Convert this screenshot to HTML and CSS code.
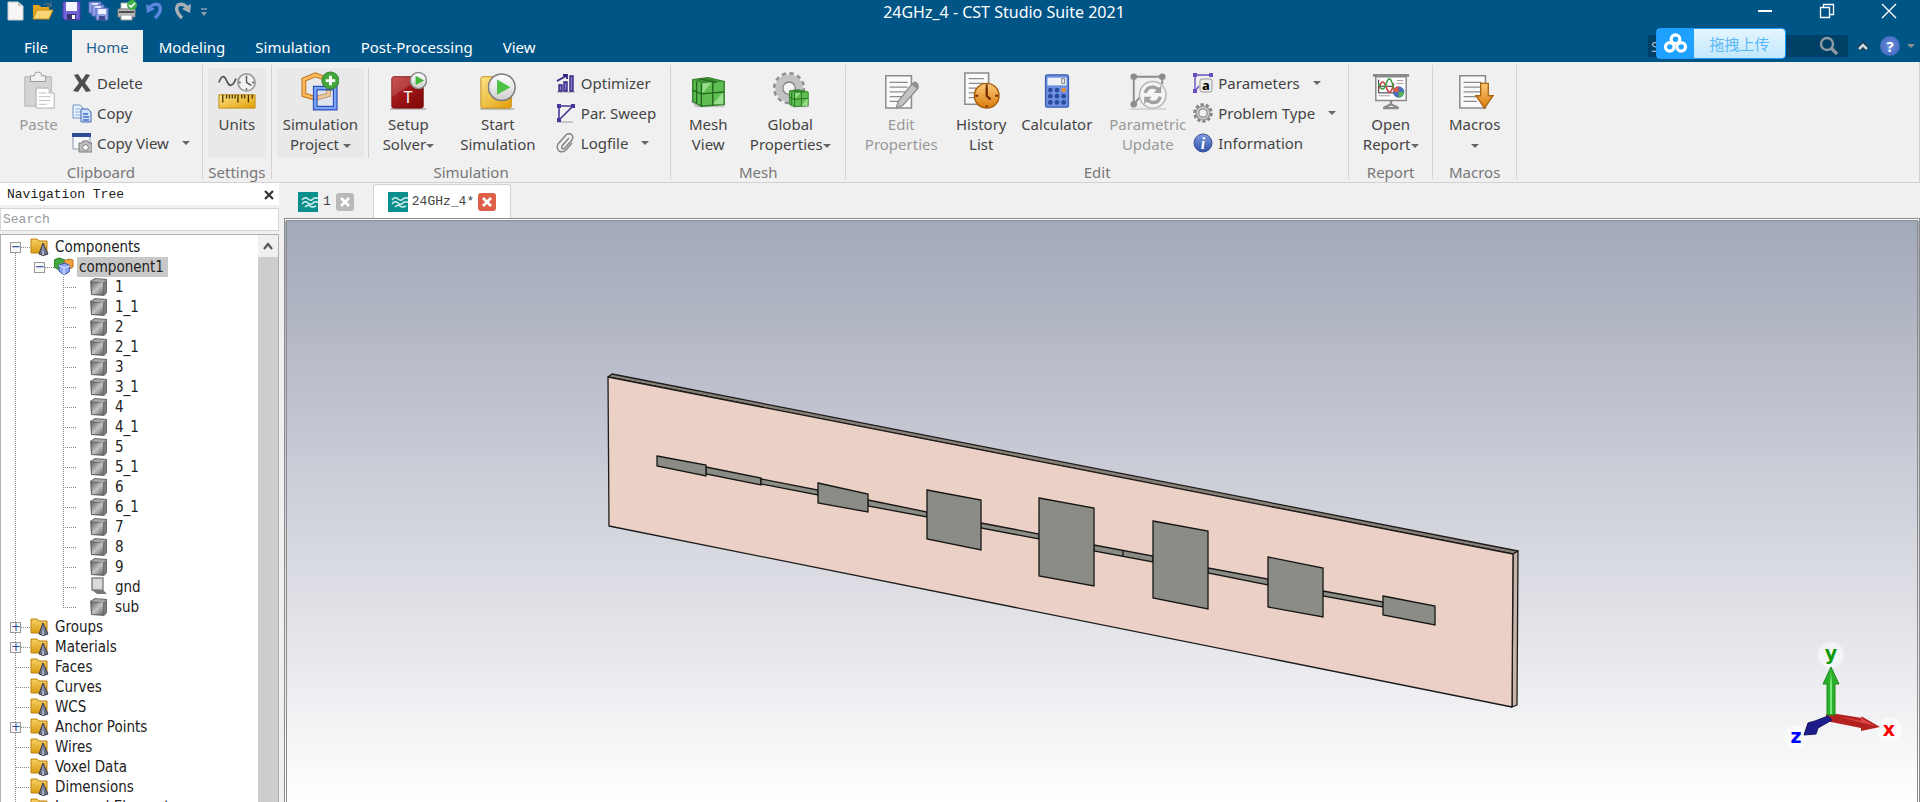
FILE: index.html
```html
<!DOCTYPE html>
<html lang="en">
<head>
  <meta charset="UTF-8" />
  <meta name="viewport" content="width=device-width, initial-scale=1.0"/>
  <title>24GHz_4 - CST Studio Suite 2021</title>
  <link rel="stylesheet" href="styles.css">
</head>
<body>

<!-- Shared icons -->
<svg class="defs" width="0" height="0" aria-hidden="true">
  <defs>
    <linearGradient id="gold" x1="0" y1="0" x2="1" y2="1"><stop offset="0" stop-color="#fbe38a"/><stop offset="1" stop-color="#e3a008"/></linearGradient>
    <linearGradient id="folderFill" x1="0" y1="0" x2="0" y2="1"><stop offset="0" stop-color="#f7cf62"/><stop offset="1" stop-color="#dc9e14"/></linearGradient>
    <linearGradient id="grey" x1="0" y1="0" x2="1" y2="1"><stop offset="0" stop-color="#6f6f6f"/><stop offset=".5" stop-color="#c4c4c4"/><stop offset="1" stop-color="#6a6a6a"/></linearGradient>
    <linearGradient id="silver" x1="0" y1="0" x2="0" y2="1"><stop offset="0" stop-color="#ffffff"/><stop offset="1" stop-color="#cfcfcf"/></linearGradient>
    <linearGradient id="red" x1="0" y1="0" x2="1" y2="1"><stop offset="0" stop-color="#c23a3a"/><stop offset=".5" stop-color="#9c1414"/><stop offset="1" stop-color="#7d0808"/></linearGradient>
    <linearGradient id="orange" x1="0" y1="0" x2="0" y2="1"><stop offset="0" stop-color="#ffc978"/><stop offset="1" stop-color="#d97c0c"/></linearGradient>
    <linearGradient id="blue" x1="0" y1="0" x2="0" y2="1"><stop offset="0" stop-color="#7f9ce0"/><stop offset="1" stop-color="#2f50a8"/></linearGradient>
  </defs>
  <symbol id="i-folder" viewBox="0 0 20 20">
    <path d="M1 2h6l2 2h8v12H1z" fill="url(#folderFill)" stroke="#b9800f"/>
    <path d="M13 6l5 11q-5 3-9 0z" fill="#6d7388" stroke="#3d3f4a"/>
    <path d="M13 8l1 10h-2z" fill="#b9bfd6"/>
  </symbol>
  <symbol id="i-cube" viewBox="0 0 20 20">
    <path d="M1 4l5-3 12 1v14l-3 3-13-1z" fill="#6c6c6c"/>
    <path d="M2 4l5-2 10 1-3 3z" fill="#a6a6a6"/>
    <path d="M3 6h11v11H3z" fill="url(#grey)"/>
    <path d="M15 6l2-2v12l-2 2z" fill="#7d7d7d"/>
  </symbol>
  <symbol id="i-logo" viewBox="0 0 20 20">
    <rect width="20" height="20" fill="#0b8f8c"/>
    <path d="M4 8q3-4 6-1t6-1h4M4 12q3-4 6-1t6-1h4M7 15q3-3 5-1t6 0" fill="none" stroke="#d7f3f0" stroke-width="1.400"/>
  </symbol>
  <symbol id="i-mesh" viewBox="0 0 40 40">
    <path d="M1 30l6 7 30 0 2-4z" fill="#000" opacity=".18"/>
    <path d="M4 8l16-2 17 4v24l-24 2-9-5z" fill="#5fbf52" stroke="#2f7d28" stroke-width="1.500"/>
    <path d="M4 8l16-2 17 4-24 2z" fill="#3f9136"/>
    <path d="M25 34L36 21v13zM14 22l10-11-10 1z" fill="#a6e39c" opacity=".8"/>
    <path d="M13 12v24M25 11v24M4 19l9 4 24-2M8 10v23M11 7l18 4" fill="none" stroke="#23691d" stroke-width="1.500"/>
  </symbol>
  <symbol id="i-doc" viewBox="0 0 40 40">
    <path d="M4 4h27v34H4z" fill="#fafafa" stroke="#8b8b8b" stroke-width="1.600"/>
    <path d="M8 11h19M8 16h19M8 21h19M8 26h19M8 31h14" stroke="#8d8d8d" stroke-width="1.400"/>
  </symbol>
</svg>

<header class="titlebar">
  <div class="title-row">
    <div class="quick">
      <button aria-label="New"><svg viewBox="0 0 22 22"><path d="M4 2h10l5 4v14H4z" fill="#f6f6f6" stroke="#cdcdcd"/><path d="M14 2v4h5z" fill="#c4c4c4"/></svg></button>
      <button aria-label="Open"><svg viewBox="0 0 22 22"><path d="M1 5h6l2 2h8v12H1z" fill="#e2a51c"/><path d="M5 10h16l-4 9H1z" fill="#fbd676" stroke="#c98c12"/><path d="M12 5q4-4 7 1M19 2v4h-4" fill="none" stroke="#4b6a80" stroke-width="1.400"/></svg></button>
      <button aria-label="Save"><svg viewBox="0 0 22 22"><path d="M3 2h17v18H5l-2-2z" fill="#6d63d6" stroke="#4a3fae"/><path d="M6 2h11v9H6z" fill="#f4f4ff"/><path d="M7 14h9v6H7z" fill="#3a3570"/><path d="M12 15h3v4h-3z" fill="#fff"/></svg></button>
      <button aria-label="Save all"><svg viewBox="0 0 22 22"><g fill="#8fa2e6" stroke="#5b6bc0"><path d="M1 2h12v11H1z"/><path d="M4 5h12v11H4z"/><path d="M8 8h12v12H8z"/></g><path d="M10 9h8v5h-8z" fill="#eef1ff"/><path d="M4 3h6v2H4zM7 6h6v2H7z" fill="#dde3ff"/><path d="M11 16h6v4h-6z" fill="#414a8e"/></svg></button>
      <button aria-label="Print"><svg viewBox="0 0 22 22"><path d="M5 3h10v6H5z" fill="#fff" stroke="#aaa"/><path d="M2 9h17v8H2z" fill="#bdbdbd" stroke="#858585"/><path d="M3 11h15v2H3z" fill="#4c4c4c"/><path d="M5 15h11v5H5z" fill="#fff" stroke="#999"/><circle cx="16" cy="5" r="5" fill="#3fae49"/><path d="M13 5l2 2 4-4" fill="none" stroke="#fff" stroke-width="1.600"/></svg></button>
      <button aria-label="Undo"><svg viewBox="0 0 22 22"><path d="M4 10q5-8 11-5 4 5-4 13" fill="none" stroke="#5c86dd" stroke-width="3.400"/><path d="M2 4l1 9 8-4z" fill="#5c86dd"/></svg></button>
      <button aria-label="Redo"><svg viewBox="0 0 22 22"><path d="M17 10q-5-8-11-5-4 5 4 13" fill="none" stroke="#a9b0b5" stroke-width="3.400"/><path d="M19 4l-1 9-8-4z" fill="#a9b0b5"/></svg></button>
      <button class="quick-more" aria-label="Customize"><svg viewBox="0 0 10 22"><path d="M1 9h6" stroke="#93a2ac" stroke-width="1.400"/><path d="M1 12h6l-3 4z" fill="#93a2ac"/></svg></button>
    </div>
    <h1 class="title">24GHz_4 - CST Studio Suite 2021</h1>
    <div class="window-buttons">
      <button aria-label="Minimize"><svg viewBox="0 0 16 16"><path d="M1 8h14" stroke="#fff" stroke-width="2"/></svg></button>
      <button aria-label="Restore"><svg viewBox="0 0 16 16"><path d="M1.500 4.500h9v10h-9zM4.500 4V1.500h10v10H11" fill="none" stroke="#fff" stroke-width="1.300"/></svg></button>
      <button aria-label="Close"><svg viewBox="0 0 16 16"><path d="M1 1l14 14M15 1L1 15" stroke="#fff" stroke-width="1.400"/></svg></button>
    </div>
  </div>
  <div class="tab-row">
    <nav class="tabs">
      <button class="tab file">File</button>
      <button class="tab active">Home</button>
      <button class="tab">Modeling</button>
      <button class="tab">Simulation</button>
      <button class="tab">Post-Processing</button>
      <button class="tab">View</button>
    </nav>
    <div class="tools">
      <div class="find">
        <input type="text" aria-label="Search" placeholder="Search">
        <svg viewBox="0 0 20 20"><circle cx="8" cy="8" r="6" fill="none" stroke="#8f9aa3" stroke-width="2.400"/><path d="M12 12l6 6" stroke="#8f9aa3" stroke-width="3.400"/></svg>
        <button class="upload">
          <span class="upload-logo"><svg viewBox="0 0 26 22"><g fill="none" stroke="#fff" stroke-width="3.400"><circle cx="13" cy="6.500" r="4.500"/><circle cx="7" cy="14.500" r="4.500"/><circle cx="19" cy="14.500" r="4.500"/></g></svg></span>
          <span class="upload-text">拖拽上传</span>
        </button>
      </div>
      <button class="collapse" aria-label="Collapse ribbon"><svg viewBox="0 0 12 12"><path d="M2 9l4-4 4 4" fill="none" stroke="#24343f" stroke-width="5"/><path d="M2 9l4-4 4 4" fill="none" stroke="#c9dbe8" stroke-width="2.600"/></svg></button>
      <button class="help" aria-label="Help">?</button>
      <span class="caret light"></span>
    </div>
  </div>
</header>

<section class="ribbon">
  <div class="group">
    <div class="group-body">
      <button class="big paste" disabled>
        <svg viewBox="0 0 40 40"><path d="M5 5h28v31H5z" fill="#d4d4d4" stroke="#b5b5b5"/><path d="M11 4h4q0-4 4-4t4 4h4v6H11z" fill="#f2f2f2" stroke="#969696"/><path d="M17 17h13l6 6v15H17z" fill="#fff" stroke="#adadad"/><path d="M30 17v6h6z" fill="#ccc"/><path d="M20 22h8M20 26h12M20 30h12M20 34h8" stroke="#bdbdbd"/></svg>
        <span>Paste</span>
      </button>
      <div class="small-list">
        <button class="small"><svg viewBox="0 0 20 20"><path d="M2 2l4-1 4 6 4-6 4 1-5 8 6 8-5 1-4-6-4 6-5-1 6-8z" fill="#4f4f4f"/></svg>Delete</button>
        <button class="small"><svg viewBox="0 0 20 20"><path d="M1 2h7l3 3v10H1z" fill="#eaf2fc" stroke="#6c93c9"/><path d="M3 6h5M3 9h6M3 12h6" stroke="#8bb0e0"/><path d="M9 6h7l3 3v10H9z" fill="#cfe0fa" stroke="#3f68b4"/><path d="M11 11h5M11 14h6M11 17h6" stroke="#3f6fc4" stroke-width="1.500"/></svg>Copy</button>
        <button class="small"><svg viewBox="0 0 20 20"><path d="M1 1h17v15H1z" fill="#f6f8fc" stroke="#8c96ad"/><path d="M0 0h19v4H0z" fill="#2d4a94"/><path d="M7 10h3l1-2h5l1 2h3v9H7z" fill="#bdbdbd" stroke="#7c7c7c"/><circle cx="13.500" cy="14.500" r="2.800" fill="#fff" stroke="#7c7c7c"/></svg>Copy View<i class="caret"></i></button>
      </div>
    </div>
    <div class="group-name">Clipboard</div>
  </div>

  <div class="group">
    <div class="group-body">
      <button class="big units hot">
        <svg viewBox="0 0 40 40"><path d="M1 11q4-11 8-2t8 2l2-4" fill="none" stroke="#555" stroke-width="1.800"/><circle cx="30" cy="11" r="9" fill="#f2f2f2" stroke="#9a9a9a" stroke-width="1.800"/><path d="M30 4v7l5 3M30 17v2M22 11h2M36 11h2" fill="none" stroke="#555" stroke-width="1.500"/><path d="M1 24h38v14H1z" fill="url(#gold)" stroke="#c28a0e"/><path d="M5 24v8M9 24v4M12 24v4M15 24v4M18 24v4M21 24v8M25 24v4M28 24v4M32 24v8M36 24v4" stroke="#4c3500" stroke-width="1.400"/></svg>
        <span>Units</span>
      </button>
    </div>
    <div class="group-name">Settings</div>
  </div>

  <div class="group">
    <div class="group-body">
      <button class="big project hot">
        <svg viewBox="0 0 40 40"><path d="M3 8l12-5 14 5v16l-14 4-12-4z" fill="none" stroke="#b96c10" stroke-width="5"/><path d="M3 8l12-5 14 5v16l-14 4-12-4z" fill="none" stroke="#ffb95c" stroke-width="3"/><path d="M15 17h21v21H15z" fill="none" stroke="#2b50bd" stroke-width="5"/><path d="M15 17h21v21H15z" fill="none" stroke="#7ba3f5" stroke-width="2.500"/><path d="M18 20h15v15H18z" fill="#cddcfb" fill-opacity=".4"/><circle cx="31" cy="9" r="9" fill="#43a83c" stroke="#2d7d28"/><path d="M31 4v10M26 9h10" stroke="#fff" stroke-width="3"/></svg>
        <span>Simulation<br>Project <i class="caret"></i></span>
      </button>
      <div class="divider"></div>
      <button class="big mid">
        <svg viewBox="0 0 40 40"><path d="M1 39h38" stroke="#000" opacity=".2" stroke-width="2"/><rect x="3" y="5" width="33" height="33" rx="2" fill="url(#red)" stroke="#7a0a0a"/><path d="M3 5h33L3 26z" fill="#fff" opacity=".14"/><text x="20" y="33" font-size="17" text-anchor="middle" fill="#fff">T</text><circle cx="31" cy="9" r="8.500" fill="url(#silver)" stroke="#8a8a8a" stroke-width="1.500"/><path d="M28 4l9 5-9 5z" fill="#41b83c"/></svg>
        <span>Setup<br>Solver<i class="caret"></i></span>
      </button>
      <button class="big start">
        <svg viewBox="0 0 40 40"><path d="M1 39h36" stroke="#000" opacity=".2" stroke-width="2"/><rect x="2" y="5" width="32" height="33" rx="2" fill="url(#gold)" stroke="#c08b12"/><circle cx="24" cy="16" r="14" fill="url(#silver)" stroke="#7d7d7d" stroke-width="1.600"/><path d="M19 8l14 8-14 8z" fill="#4cc247"/></svg>
        <span>Start<br>Simulation</span>
      </button>
      <div class="small-list spaced">
        <button class="small"><svg viewBox="0 0 20 20"><path d="M1 19h18" stroke="#999"/><path d="M3 12h3v6H3zM8 9h3v9H8zM14 3h3v15h-3z" fill="#8a7cd0" stroke="#34247f" stroke-width="1.400"/><path d="M1 8l9-5M7 2h4v4" fill="none" stroke="#34247f" stroke-width="1.800"/></svg>Optimizer</button>
        <button class="small"><svg viewBox="0 0 20 20"><path d="M1 19h16" stroke="#999"/><path d="M3 17V3h14L3 17" fill="none" stroke="#46389a" stroke-width="1.600"/><path d="M1 1h4v4H1zM15 1h4v4h-4zM1 15h4v4H1z" fill="#46389a"/></svg>Par. Sweep</button>
        <button class="small"><svg viewBox="0 0 20 20"><path d="M13 5l-7 8q-1 3 2 3l8-9q2-4-1-6-3-1-5 1l-8 9q-2 4 1 7 4 2 7-1l6-7" fill="none" stroke="#858585" stroke-width="1.500"/></svg>Logfile<i class="caret"></i></button>
      </div>
    </div>
    <div class="group-name">Simulation</div>
  </div>

  <div class="group">
    <div class="group-body">
      <button class="big mesh">
        <svg viewBox="0 0 40 40"><use href="#i-mesh"/></svg>
        <span>Mesh<br>View</span>
      </button>
      <button class="big xwide">
        <svg viewBox="0 0 40 40"><circle cx="19" cy="17" r="14" fill="none" stroke="#8e8e8e" stroke-width="6" stroke-dasharray="4 3.330"/><circle cx="19" cy="17" r="10.500" fill="none" stroke="#c2c2c4" stroke-width="8"/><circle cx="19" cy="17" r="6.500" fill="#f5f5f5" stroke="#858585" stroke-width="1.400"/><use href="#i-mesh" x="17" y="15" width="24" height="24"/></svg>
        <span>Global<br>Properties<i class="caret"></i></span>
      </button>
    </div>
    <div class="group-name">Mesh</div>
  </div>

  <div class="group">
    <div class="group-body">
      <button class="big xwide" disabled>
        <svg viewBox="0 0 40 40"><use href="#i-doc"/><path d="M17 31L32 12l6 5-16 18-7 3z" fill="#c3c3c3" stroke="#8b8b8b" stroke-width="1.400"/><path d="M31 13l3-3q4 0 5 5l-2 3z" fill="#919191"/></svg>
        <span>Edit<br>Properties</span>
      </button>
      <button class="big narrow">
        <svg viewBox="0 0 40 40"><path d="M3 1h25v33H3z" fill="#fafafa" stroke="#8b8b8b" stroke-width="1.600"/><path d="M7 7h16M7 12h16M7 17h8M7 22h6M7 27h6" stroke="#8d8d8d" stroke-width="1.400"/><circle cx="26" cy="25" r="13" fill="url(#orange)" stroke="#a65e0c" stroke-width="1.500"/><path d="M26 16v9l4 4" fill="none" stroke="#6d2c00" stroke-width="2.400"/><path d="M26 13v3M26 35v2M14 25h3M35 25h3" stroke="#6d2c00" stroke-width="2"/></svg>
        <span>History<br>List</span>
      </button>
      <button class="big wide">
        <svg viewBox="0 0 40 40"><rect x="8" y="3" width="24" height="34" rx="2" fill="#6f90e2" stroke="#3c5fb4" stroke-width="1.500"/><path d="M10 6h20v8H10z" fill="#eef0f4"/><path d="M25 7h3v5h-3z" fill="none" stroke="#777"/><g fill="#2a4c9f"><circle cx="13" cy="19" r="2.500"/><circle cx="20" cy="19" r="2.500"/><circle cx="27" cy="19" r="2.500" fill="#e0903a"/><circle cx="13" cy="25.500" r="2.500"/><circle cx="20" cy="25.500" r="2.500"/><circle cx="27" cy="25.500" r="2.500"/><circle cx="13" cy="32" r="2.500"/><circle cx="20" cy="32" r="2.500"/><circle cx="27" cy="32" r="2.500"/></g></svg>
        <span>Calculator</span>
      </button>
      <button class="big wide" disabled>
        <svg viewBox="0 0 40 40"><path d="M1 39h38" stroke="#bbb"/><path d="M5 34V5h30v8M5 34l6-7" fill="none" stroke="#8c8c8c" stroke-width="2"/><g fill="#8c8c8c"><circle cx="5" cy="5" r="3.500"/><circle cx="35" cy="5" r="3.500"/><circle cx="5" cy="34" r="3.500"/></g><circle cx="25" cy="24" r="14" fill="#f4f4f4" stroke="#b5b5b5" stroke-width="1.500"/><path d="M17 22q2-7 9-6 4 1 5 3M33 26q-2 7-9 6-4-1-5-3" fill="none" stroke="#a0a0a0" stroke-width="3.500"/><path d="M34 14v8h-8zM16 34v-8h8z" fill="#a0a0a0"/></svg>
        <span>Parametric<br>Update</span>
      </button>
      <div class="small-list">
        <button class="small"><svg viewBox="0 0 20 20"><path d="M2 18V2h16M2 18l4-5" fill="none" stroke="#6a4fc0" stroke-width="1.400"/><path d="M0 0h4v4H0zM16 0h4v4h-4zM0 16h4v4H0z" fill="#6a4fc0"/><rect x="7" y="6" width="12" height="13" rx="2" fill="#eee" stroke="#999"/><text x="13" y="17" font-size="13" font-weight="bold" text-anchor="middle">a</text></svg>Parameters<i class="caret"></i></button>
        <button class="small"><svg viewBox="0 0 20 20"><circle cx="10" cy="10" r="8.300" fill="none" stroke="#858585" stroke-width="3" stroke-dasharray="3.200 2"/><circle cx="10" cy="10" r="5.600" fill="none" stroke="#8f8f8f" stroke-width="4"/><circle cx="10" cy="10" r="5.600" fill="none" stroke="#ccc" stroke-width="1.600"/></svg>Problem Type<i class="caret"></i></button>
        <button class="small"><svg viewBox="0 0 20 20"><circle cx="10" cy="10" r="9" fill="url(#blue)" stroke="#3a4e98"/><text class="serif" x="10" y="16" font-size="16" font-weight="bold" font-style="italic" text-anchor="middle" fill="#fff">i</text></svg>Information</button>
      </div>
    </div>
    <div class="group-name">Edit</div>
  </div>

  <div class="group">
    <div class="group-body">
      <button class="big mid">
        <svg viewBox="0 0 40 40"><path d="M1 2h38v3H1z" fill="#8a8a8a"/><path d="M4 5h32v25H4z" fill="#fdfdfd" stroke="#8a8a8a" stroke-width="1.600"/><path d="M7 8v14h16M7 15h16" fill="none" stroke="#222"/><path d="M7 18q4-14 8-2t8-4" fill="none" stroke="#c83838" stroke-width="1.600"/><path d="M7 12q4 12 8 0t8 6" fill="none" stroke="#3b9b40" stroke-width="1.600"/><path d="M26 9h7M26 12h7M7 25h12" stroke="#999"/><circle cx="28" cy="21" r="6" fill="#4870b8"/><path d="M28 21v-6a6 6 0 0 0-6 6z" fill="#d85a4a"/><path d="M28 21h6a6 6 0 0 1-6 6z" fill="#58b158"/><path d="M20 30v4l-8 4h16l-8-4" fill="none" stroke="#8a8a8a" stroke-width="2.400"/></svg>
        <span>Open<br>Report<i class="caret"></i></span>
      </button>
    </div>
    <div class="group-name">Report</div>
  </div>

  <div class="group">
    <div class="group-body">
      <button class="big mid">
        <svg viewBox="0 0 40 40"><use href="#i-doc"/><path d="M26 12h8v13h5L30 38 21 25h5z" fill="url(#orange)" stroke="#a8650c" stroke-width="1.400"/></svg>
        <span>Macros<br><i class="caret"></i></span>
      </button>
    </div>
    <div class="group-name">Macros</div>
  </div>
</section>

<main class="workspace">
  <aside class="nav">
    <div class="nav-title">
      <h2>Navigation Tree</h2>
      <button aria-label="Close panel"><svg viewBox="0 0 12 12"><path d="M2 2l8 8M10 2l-8 8" stroke="#333" stroke-width="2.200"/></svg></button>
    </div>
    <input class="nav-search" type="text" aria-label="Search tree" placeholder="Search">
    <div class="tree-box">
      <ul class="tree">
        <li>
          <div class="row"><span class="toggle">−</span><i class="dots"></i><svg><use href="#i-folder"/></svg><span>Components</span></div>
          <ul class="tree-sub">
            <li>
              <div class="row"><span class="toggle">−</span><i class="dots"></i><svg viewBox="0 0 20 20"><path d="M0 3l5-2 6 2v8l-6 2-5-3z" fill="#45a83c" stroke="#2b7a25"/><path d="M10 4l5-2 4 1v7l-5 3-4-3z" fill="#f2a43c" stroke="#b9731a"/><path d="M5 8l6-2 5 3-1 6-5 3-5-4z" fill="#93a8f5" stroke="#3d52b8"/><path d="M5 8l5 3v7M10 11l6-2" fill="none" stroke="#e6ebff"/></svg><span class="selected">component1</span></div>
              <ul class="tree-leaves">
                <li class="row"><i class="dots"></i><svg><use href="#i-cube"/></svg><span>1</span></li>
                <li class="row"><i class="dots"></i><svg><use href="#i-cube"/></svg><span>1_1</span></li>
                <li class="row"><i class="dots"></i><svg><use href="#i-cube"/></svg><span>2</span></li>
                <li class="row"><i class="dots"></i><svg><use href="#i-cube"/></svg><span>2_1</span></li>
                <li class="row"><i class="dots"></i><svg><use href="#i-cube"/></svg><span>3</span></li>
                <li class="row"><i class="dots"></i><svg><use href="#i-cube"/></svg><span>3_1</span></li>
                <li class="row"><i class="dots"></i><svg><use href="#i-cube"/></svg><span>4</span></li>
                <li class="row"><i class="dots"></i><svg><use href="#i-cube"/></svg><span>4_1</span></li>
                <li class="row"><i class="dots"></i><svg><use href="#i-cube"/></svg><span>5</span></li>
                <li class="row"><i class="dots"></i><svg><use href="#i-cube"/></svg><span>5_1</span></li>
                <li class="row"><i class="dots"></i><svg><use href="#i-cube"/></svg><span>6</span></li>
                <li class="row"><i class="dots"></i><svg><use href="#i-cube"/></svg><span>6_1</span></li>
                <li class="row"><i class="dots"></i><svg><use href="#i-cube"/></svg><span>7</span></li>
                <li class="row"><i class="dots"></i><svg><use href="#i-cube"/></svg><span>8</span></li>
                <li class="row"><i class="dots"></i><svg><use href="#i-cube"/></svg><span>9</span></li>
                <li class="row"><i class="dots"></i><svg viewBox="0 0 20 20"><path d="M3 1h11v12H3z" fill="#d9d9d9" stroke="#858585" stroke-width="1.500"/><path d="M3 13h11l4 4H8z" fill="#777"/></svg><span>gnd</span></li>
                <li class="row"><i class="dots"></i><svg><use href="#i-cube"/></svg><span>sub</span></li>
              </ul>
            </li>
          </ul>
        </li>
        <li class="row"><span class="toggle">+</span><i class="dots"></i><svg><use href="#i-folder"/></svg><span>Groups</span></li>
        <li class="row"><span class="toggle">+</span><i class="dots"></i><svg><use href="#i-folder"/></svg><span>Materials</span></li>
        <li class="row plain"><i class="dots"></i><svg><use href="#i-folder"/></svg><span>Faces</span></li>
        <li class="row plain"><i class="dots"></i><svg><use href="#i-folder"/></svg><span>Curves</span></li>
        <li class="row plain"><i class="dots"></i><svg><use href="#i-folder"/></svg><span>WCS</span></li>
        <li class="row"><span class="toggle">+</span><i class="dots"></i><svg><use href="#i-folder"/></svg><span>Anchor Points</span></li>
        <li class="row plain"><i class="dots"></i><svg><use href="#i-folder"/></svg><span>Wires</span></li>
        <li class="row plain"><i class="dots"></i><svg><use href="#i-folder"/></svg><span>Voxel Data</span></li>
        <li class="row plain"><i class="dots"></i><svg><use href="#i-folder"/></svg><span>Dimensions</span></li>
        <li class="row plain"><i class="dots"></i><svg><use href="#i-folder"/></svg><span>Lumped Elements</span></li>
      </ul>
      <div class="scrollbar">
        <button aria-label="Scroll up"><svg viewBox="0 0 12 12"><path d="M2 9l4-5 4 5" fill="none" stroke="#555" stroke-width="2.200"/></svg></button>
        <div class="thumb"></div>
      </div>
    </div>
  </aside>

  <section class="document">
    <div class="doc-tabs">
      <div class="doc-tab">
        <svg class="logo"><use href="#i-logo"/></svg>
        <span>1</span>
        <button class="close" aria-label="Close 1"><svg viewBox="0 0 10 10"><path d="M1 1l8 8M9 1L1 9" stroke="#fff" stroke-width="2.600"/></svg></button>
      </div>
      <div class="doc-tab active">
        <svg class="logo"><use href="#i-logo"/></svg>
        <span>24GHz_4*</span>
        <button class="close" aria-label="Close 24GHz_4"><svg viewBox="0 0 10 10"><path d="M1 1l8 8M9 1L1 9" stroke="#fff" stroke-width="2.600"/></svg></button>
      </div>
    </div>
    <div class="viewport">
      <svg class="scene" viewBox="287 221 1630 581">
        <!-- substrate -->
        <g stroke="#1c1c1c" stroke-width="1.300" stroke-linejoin="round">
          <path d="M608 377l4-3 906 177-5 3z" fill="#8b8078"/>
          <path d="M1513 554l5-3-1 154-5 2z" fill="#c9b3a8"/>
          <path d="M608 377l905 177-1 153-903-181z" fill="#ebd1c5"/>
        </g>
        <!-- feed lines and patches -->
        <g fill="#8b8c85" stroke="#161616" stroke-width="1.300">
          <path d="M706 467l55 11v7l-55-11z"/>
          <path d="M761 479l57 11v5l-57-11z"/>
          <path d="M868 500l59 12v5l-59-11z"/>
          <path d="M981 523l58 11v5l-58-11z"/>
          <path d="M1094 545l59 11v6l-59-11z"/>
          <path d="M1123 551v5"/>
          <path d="M1208 568l60 11v6l-60-12z"/>
          <path d="M1323 591l60 11v5l-60-11z"/>
          <path d="M657 456l49 9v11l-49-10z"/>
          <path d="M818 483l50 11v18l-50-9z"/>
          <path d="M927 490l54 10v50l-54-11z"/>
          <path d="M1039 498l55 10v78l-55-10z"/>
          <path d="M1153 521l55 10v78l-55-11z"/>
          <path d="M1268 557l55 11v49l-55-10z"/>
          <path d="M1383 596l52 10v19l-52-10z"/>
        </g>
        <!-- axes -->
        <g fill="#fff" fill-opacity=".5">
          <circle cx="1831" cy="655" r="13"/><circle cx="1889" cy="730" r="13"/><circle cx="1796" cy="737" r="12"/>
        </g>
        <path d="M1826 714h11l25 4-1-2 19 11-19 4v-3l-35-7z" fill="#b32121"/>
        <path d="M1836 716l25 5 0-3 14 8z" fill="#e04a4a"/>
        <path d="M1827 715v-31h-4l8-17 8 17h-4v31z" fill="#2cb02c" stroke="#1c8a1c"/>
        <path d="M1830 714v-31l1-12 1 12v31z" fill="#77e877"/>
        <path d="M1828 716l4 4-14 8-2 6-12 1 4-12 7-2z" fill="#1d1d8c" stroke="#14145e"/>
        <g class="axis-label" text-anchor="middle">
          <text x="1831" y="660" fill="#0a9a0a">y</text>
          <text x="1889" y="736" fill="#f00">x</text>
          <text x="1796" y="743" fill="#00f">z</text>
        </g>
      </svg>
    </div>
  </section>
</main>

</body>
</html>
```

FILE: styles.css
```css
* {
  box-sizing: border-box;
}

body {
  margin: 0;
  height: 100vh;
  display: flex;
  flex-direction: column;
  overflow: hidden;
  background-color: #f0f0f0;
  color: #444;
  font-family: "Noto Sans", "Noto Sans CJK SC", sans-serif;
  font-size: 15px;
  line-height: 20px;
}

button {
  padding: 0;
  border: none;
  background: none;
  color: inherit;
  font: inherit;
}

h1, h2 {
  margin: 0;
  font: inherit;
}

ul {
  margin: 0;
  padding: 0;
  list-style: none;
}

svg {
  display: block;
  flex: none;
}

.defs {
  position: absolute;
}

.caret {
  display: inline-block;
  border: 4px solid transparent;
  border-top: 4px solid #666;
  border-bottom: 0;
  vertical-align: middle;
}

.caret.light {
  border-top-color: #8b8f92;
}

/* title bar */
.titlebar {
  background-color: #005587;
  color: #fff;
}

.title-row {
  display: flex;
  align-items: flex-start;
  height: 30px;
}

.quick {
  display: flex;
  gap: 6px;
  padding-left: 4px;
}

.quick svg {
  width: 22px;
  height: 22px;
}

.quick .quick-more svg {
  width: 10px;
}

.title {
  flex: 1;
  padding: 2px 0 0 64px;
  font-size: 16px;
  text-align: center;
}

.window-buttons {
  display: flex;
}

.window-buttons button {
  width: 62px;
  height: 22px;
}

.window-buttons svg {
  width: 16px;
  height: 16px;
  margin: 0 auto;
}

.tab-row {
  display: flex;
  justify-content: space-between;
  height: 32px;
}

.tabs {
  display: flex;
  gap: 2px;
}

.tab {
  padding: 1px 14px 0;
}

.tab.file {
  padding: 1px 22px 0 24px;
}

.tab.active {
  background-color: #f0f0f0;
  color: #1c6090;
}

.tools {
  display: flex;
  align-items: center;
  padding-right: 5px;
}

.find {
  position: relative;
  display: flex;
  align-items: center;
  width: 200px;
  height: 22px;
  padding-right: 9px;
  background-color: #003f66;
}

.find input {
  flex: 1;
  width: 100px;
  padding: 0 3px;
  border: none;
  background: none;
  color: #fff;
  font: inherit;
}

.find input::placeholder {
  color: #a9bccb;
}

.find svg {
  width: 20px;
  height: 20px;
}

.upload {
  position: absolute;
  top: -7px;
  left: 8px;
  display: flex;
  width: 130px;
  height: 31px;
  border: 1px solid #1f9bff;
  border-radius: 4px;
  overflow: hidden;
  background: linear-gradient(#e6f5ff, #c2e8fc);
}

.upload-logo {
  width: 37px;
  height: 100%;
  padding: 4px 6px;
  background-color: #1fa2ff;
}

.find .upload-logo svg {
  width: 25px;
  height: 21px;
}

.upload-text {
  flex: 1;
  line-height: 30px;
  color: #5bb8f5;
}

.collapse svg {
  width: 12px;
  height: 12px;
  margin: 0 9px;
}

.help {
  width: 20px;
  height: 20px;
  margin: 0 7px 0 2px;
  border-radius: 50%;
  background: radial-gradient(#6a90e0, #3a5db4);
  color: #fff;
  font-weight: bold;
}

/* ribbon */
.ribbon {
  display: flex;
  height: 121px;
  padding-top: 3px;
  border-bottom: 1px solid #d2d2d2;
  border-right: 1px solid #d2d2d2;
}

.group {
  height: 114px;
  padding: 3px 5px 0;
  border-right: 1px solid #d2d2d2;
}

.group-body {
  display: flex;
  height: 90px;
}

.group-name {
  padding-top: 4px;
  color: #777;
  text-align: center;
}

.big {
  display: flex;
  flex-direction: column;
  align-items: center;
  gap: 3px;
  padding-top: 3px;
  white-space: nowrap;
}

.big svg {
  width: 38px;
  height: 40px;
}

.big:disabled {
  color: #999;
}

.paste {
  width: 67px;
}

.units {
  width: 58px;
}

.project {
  width: 87px;
}

.start {
  width: 106px;
}

.mesh {
  width: 64px;
}

.narrow {
  width: 60px;
}

.mid {
  width: 73px;
}

.wide {
  width: 91px;
}

.xwide {
  width: 100px;
}

.hot {
  background-color: #e9e9e9;
}

.divider {
  width: 1px;
  margin: 0 3px 0 4px;
  background-color: #d2d2d2;
}

.small-list {
  display: flex;
  flex-direction: column;
  padding-right: 7px;
}

.small-list.spaced {
  padding: 0 9px 0 5px;
}

.small {
  display: flex;
  align-items: center;
  gap: 5px;
  height: 30px;
  white-space: nowrap;
}

.small svg {
  width: 20px;
  height: 20px;
}

.small .caret {
  margin-left: 8px;
}

.serif {
  font-family: "Liberation Serif", serif;
}

/* workspace */
.workspace {
  display: flex;
  flex: 1;
  min-height: 0;
}

.nav {
  display: flex;
  flex-direction: column;
  width: 279px;
  margin-right: 5px;
  font-family: "Liberation Mono", monospace;
  font-size: 13px;
}

.nav-title {
  display: flex;
  justify-content: space-between;
  align-items: center;
  height: 22px;
  padding: 2px 4px 0 7px;
  background-color: #fff;
  color: #222;
}

.nav-title svg {
  width: 12px;
  height: 12px;
}

.nav-search {
  height: 23px;
  margin: 3px 0;
  padding: 0 2px;
  border: 1px solid #d5d5d5;
  background-color: #fff;
  font: inherit;
}

.nav-search::placeholder {
  color: #999;
}

.tree-box {
  display: flex;
  flex: 1;
  min-height: 0;
  border: 1px solid #b0b0b0;
  border-bottom: none;
  background-color: #fff;
  overflow: hidden;
}

.tree {
  flex: 1;
  padding: 2px 0 0 9px;
  background: repeating-linear-gradient(#888 0 1px, transparent 1px 2px) 14px 12px / 1px 100% no-repeat;
  color: #222;
  font-family: "DejaVu Sans Condensed", "Noto Sans", sans-serif;
  font-size: 15px;
}

.row {
  display: flex;
  align-items: center;
  height: 20px;
  white-space: nowrap;
}

.row svg {
  width: 20px;
  height: 20px;
  margin-right: 5px;
}

.toggle {
  width: 11px;
  height: 11px;
  border: 1px solid #999;
  background-color: #f8f8f8;
  color: #2b4a9c;
  font-size: 13px;
  line-height: 8px;
  text-align: center;
}

.dots {
  width: 9px;
  height: 1px;
  background: repeating-linear-gradient(90deg, #888 0 1px, transparent 1px 2px);
}

.plain .dots {
  width: 14px;
  margin-left: 6px;
}

.tree-sub {
  padding-left: 24px;
}

.tree-leaves {
  padding-left: 29px;
  background: repeating-linear-gradient(#888 0 1px, transparent 1px 2px) 29px 0 / 1px calc(100% - 10px) no-repeat;
}

.tree-leaves .dots {
  width: 14px;
  margin-right: 12px;
}

.tree-leaves svg {
  margin-right: 6px;
}

.selected {
  margin-left: -2px;
  padding: 0 4px 0 2px;
  background-color: #c8c8c8;
}

.scrollbar {
  display: flex;
  flex-direction: column;
  width: 20px;
  background-color: #f0f0f0;
}

.scrollbar button {
  height: 22px;
}

.scrollbar svg {
  width: 12px;
  height: 12px;
  margin: 0 auto;
}

.thumb {
  flex: 1;
  background-color: #cdcdcd;
}

.document {
  display: flex;
  flex: 1;
  flex-direction: column;
  min-width: 0;
}

.doc-tabs {
  display: flex;
  gap: 5px;
  height: 35px;
  padding-top: 1px;
  font-family: "Liberation Mono", monospace;
  font-size: 13px;
}

.doc-tab {
  display: flex;
  align-items: center;
  gap: 5px;
  padding: 1px 14px 0;
}

.doc-tab.active {
  gap: 4px;
  border: 1px solid #d2d2d2;
  border-bottom: none;
  border-radius: 3px 3px 0 0;
  background-color: #fff;
}

.logo {
  width: 20px;
  height: 20px;
}

.close {
  width: 18px;
  height: 18px;
  padding: 4px;
  border-radius: 3px;
  background-color: #b9b9b9;
}

.active .close {
  background-color: #dd5f48;
}

.close svg {
  width: 10px;
  height: 10px;
}

.viewport {
  flex: 1;
  min-height: 0;
  border: 3px double #8c8c8c;
  border-bottom: none;
  background: linear-gradient(#a2a9b8, #c3c5d1 35%, #e3e4e9 70%, #fff);
}

.scene {
  width: 100%;
  height: 100%;
}

.axis-label {
  font-family: "DejaVu Sans", sans-serif;
  font-size: 19px;
  font-weight: bold;
}
```
